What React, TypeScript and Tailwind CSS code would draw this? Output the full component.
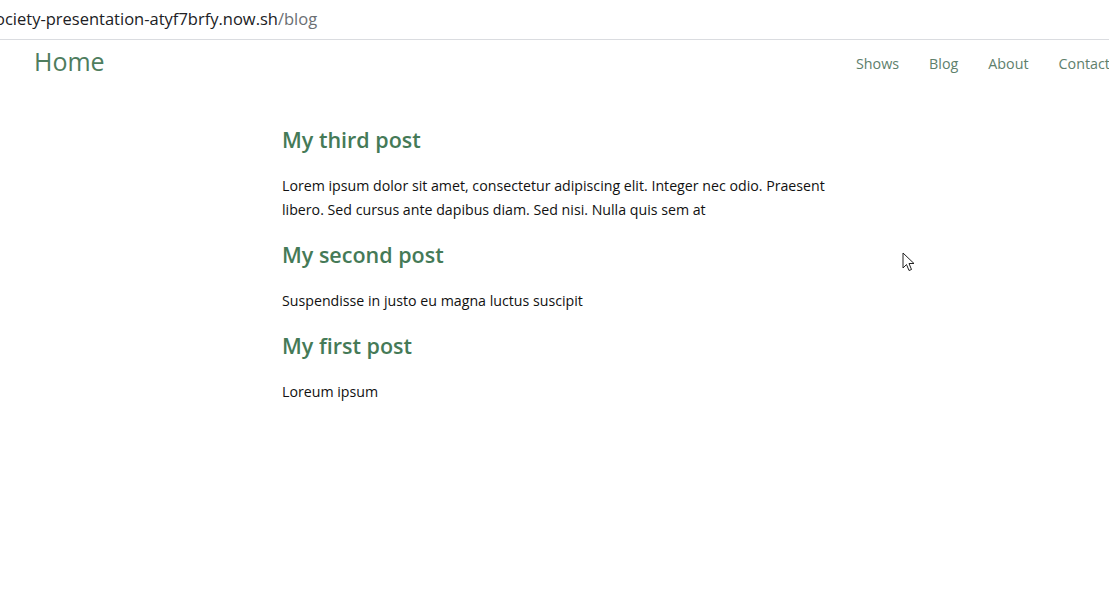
const posts = [
  {
    title: 'My third post',
    body: 'Lorem ipsum dolor sit amet, consectetur adipiscing elit. Integer nec odio. Praesent libero. Sed cursus ante dapibus diam. Sed nisi. Nulla quis sem at',
  },
  { title: 'My second post', body: 'Suspendisse in justo eu magna luctus suscipit' },
  { title: 'My first post', body: 'Loreum ipsum' },
];

const links = ['Shows', 'Blog', 'About', 'Contact'];

function Cursor() {
  return (
    <svg className="absolute left-[902px] top-[252px]" width="14" height="22" viewBox="0 0 14 22">
      <path d="M1 1 L1 16 L4.5 12.5 L7 18.5 L9.5 17.5 L7 11.5 L12 11.5 Z" fill="#fff" stroke="#222" strokeWidth="1" strokeLinejoin="round" />
    </svg>
  );
}

export default function App() {
  return (
    <div className="relative h-[616px] w-[1109px] overflow-hidden bg-white font-['Open_Sans',sans-serif]">
      <div className="flex h-[40px] items-center whitespace-nowrap border-b border-[#dadce0] text-[16.5px]">
        <span className="ml-[-5px] text-[#202124]">ociety-presentation-atyf7brfy.now.sh</span>
        <span className="text-[#6b6f73]">/blog</span>
      </div>

      <nav className="flex h-[44px] items-center pl-[34px]">
        <a className="text-[25px] text-[#4e7d5e]">Home</a>
        <ul className="ml-auto flex w-[253px] shrink-0 gap-[30px] whitespace-nowrap pt-[3px] text-[14.3px] text-[#5e806c]">
          {links.map((l) => (
            <li key={l}>{l}</li>
          ))}
        </ul>
      </nav>

      <main className="ml-[282px] w-[552px] pt-[40px]">
        {posts.map((p) => (
          <article key={p.title} className="mb-[17.5px]">
            <h2 className="text-[21.5px] font-semibold leading-[32px] text-[#457a57]">{p.title}</h2>
            <p className="mt-[17.5px] text-[14.2px] leading-[24px] text-[#111]">{p.body}</p>
          </article>
        ))}
      </main>

      <Cursor />
    </div>
  );
}
